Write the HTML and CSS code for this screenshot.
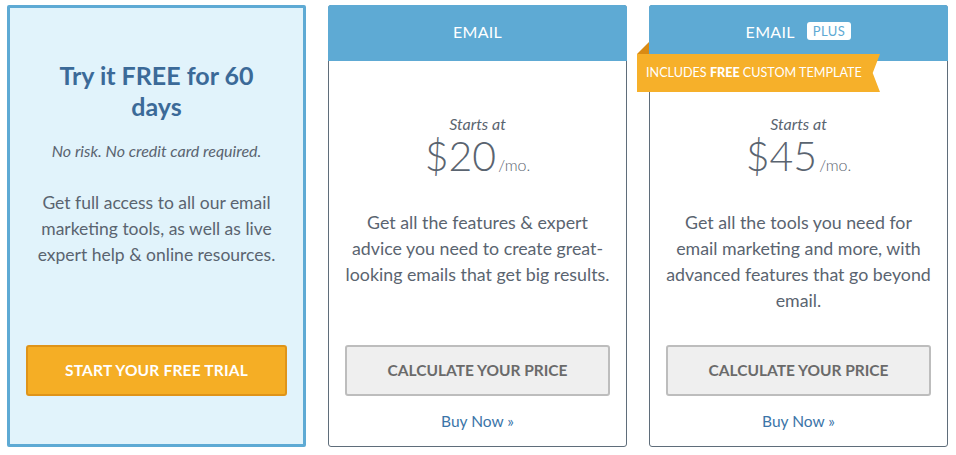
FILE: index.html
```html
<!DOCTYPE html>
<html lang="en">

<head>
  <meta charset="UTF-8">
  <meta name="viewport" content="width=device-width, initial-scale=1.0">
  <title>Pricing</title>
  <link rel="stylesheet" href="styles.css">
</head>

<body>
  <div class="plans">
    <!-- Free trial card -->
    <div class="plan trial">
      <h2>Try it FREE for 60 days</h2>
      <p class="no-risk">No risk. No credit card required.</p>
      <p class="desc">Get full access to all our email marketing tools, as well as live expert help &amp; online resources.</p>
      <a class="btn btn-orange" href="#">Start your free trial</a>
    </div>

    <!-- Email plan -->
    <div class="plan">
      <div class="plan-head">EMAIL</div>
      <div class="plan-body">
        <div class="starts">Starts at</div>
        <div class="price">$20<span>/mo.</span></div>
        <p class="desc">Get all the features &amp; expert advice you need to create great-looking emails that get big results.</p>
        <a class="btn btn-gray" href="#">Calculate your price</a>
        <a class="buy" href="#">Buy Now &raquo;</a>
      </div>
    </div>

    <!-- Email plus plan -->
    <div class="plan">
      <div class="plan-head">EMAIL <span class="badge">PLUS</span></div>
      <div class="ribbon">INCLUDES <b>FREE</b> CUSTOM TEMPLATE</div>
      <div class="plan-body">
        <div class="starts">Starts at</div>
        <div class="price">$45<span>/mo.</span></div>
        <p class="desc">Get all the tools you need for email marketing and more, with advanced features that go beyond email.</p>
        <a class="btn btn-gray" href="#">Calculate your price</a>
        <a class="buy" href="#">Buy Now &raquo;</a>
      </div>
    </div>
  </div>
</body>

</html>
```

FILE: styles.css
```css
/* Page */
body {
  margin: 0;
  font-family: Lato, "Open Sans", Arial, sans-serif;
  color: #5a6470;
  background: #fff;
}

.plans {
  display: flex;
  gap: 22px;
  padding: 5px 7px;
}

/* Cards */
.plan {
  position: relative;
  width: 299px;
  height: 442px;
  box-sizing: border-box;
  border: 1px solid #5f6d7a;
  border-radius: 3px;
  display: flex;
  flex-direction: column;
  text-align: center;
}

.plan.trial {
  background-color: #e1f3fb;
  border: 3px solid #5eaad4;
  border-radius: 2px;
  padding: 52px 16px 48px;
}

.trial h2 {
  margin: 0;
  font-size: 25px;
  line-height: 31px;
  font-weight: 700;
  color: #3b6a98;
  padding: 0 10px;
}

.no-risk {
  margin: 19px 0 0;
  font-size: 16px;
  line-height: 20px;
  font-style: italic;
}

.desc {
  margin: 29px 0 0;
  font-size: 17.5px;
  line-height: 26px;
}

.plan-head {
  background-color: #5eaad4;
  color: #fff;
  height: 56px;
  line-height: 53px;
  font-size: 16px;
  letter-spacing: 0.3px;
  margin: -1px -1px 0;
  border-radius: 3px 3px 0 0;
}

.badge {
  display: inline-block;
  background: #fff;
  color: #5eaad4;
  font-size: 13px;
  line-height: 18px;
  padding: 0 6px;
  margin-left: 8px;
  border-radius: 3px;
  letter-spacing: 0.5px;
  vertical-align: 2px;
}

/* Orange ribbon over the plus card */
.ribbon {
  position: absolute;
  left: -13px;
  top: 48px;
  width: 243px;
  height: 38px;
  line-height: 38px;
  background-color: #f6b02a;
  color: #fff;
  font-size: 12.6px;
  text-align: left;
  padding-left: 9px;
  box-sizing: border-box;
  clip-path: polygon(0 0, 100% 0, 97% 50%, 100% 100%, 0 100%);
}

.ribbon b {
  font-weight: 900;
}

.plan .ribbon + .plan-body::before {
  content: "";
  position: absolute;
  left: -13px;
  top: 36px;
  border-style: solid;
  border-width: 0 0 12px 12px;
  border-color: transparent transparent #d98b14 transparent;
}

.plan-body {
  flex: 1;
  display: flex;
  flex-direction: column;
  padding: 54px 15px 15px;
}

.starts {
  font-size: 16px;
  line-height: 18px;
  font-style: italic;
}

.price {
  margin-top: 1px;
  font-size: 41px;
  line-height: 43px;
  font-weight: 300;
  color: #5a6470;
}

.price span {
  font-size: 16px;
  line-height: 1;
  margin-left: 2px;
}

.plan-body .desc {
  margin-top: 32px;
  font-size: 17.8px;
}

/* Buttons */
.btn {
  display: block;
  margin-top: auto;
  height: 51px;
  line-height: 47px;
  box-sizing: border-box;
  text-decoration: none;
  text-transform: uppercase;
  font-weight: 700;
  font-size: 15.5px;
  border-radius: 3px;
}

.btn-orange {
  background-color: #f5ae25;
  border: 2px solid #df9419;
  color: #fff;
  letter-spacing: 0.2px;
}

.btn-gray {
  background-color: #efefef;
  border: 2px solid #bdbdbd;
  color: #6a6a6a;
  margin-left: 1px;
  margin-right: 1px;
}

.buy {
  display: block;
  margin-top: 15px;
  line-height: 20px;
  font-size: 15.5px;
  color: #3b74a8;
  text-decoration: none;
}
```
